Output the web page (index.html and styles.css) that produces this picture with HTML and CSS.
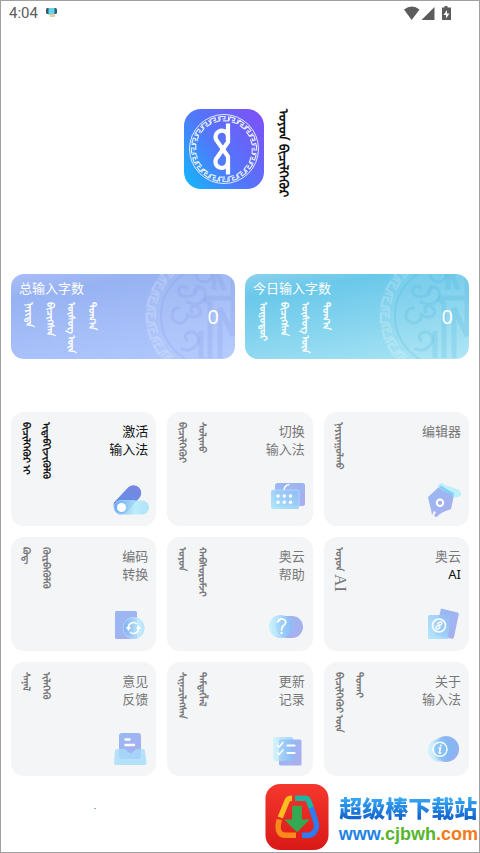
FILE: index.html
```html
<!DOCTYPE html>
<html lang="zh-CN">
<head>
<meta charset="utf-8">
<meta name="viewport" content="width=device-width, initial-scale=1">
<title>奥云输入法</title>
<link rel="stylesheet" href="styles.css">
</head>
<body>
<svg class="defs" aria-hidden="true">
  <defs>
    <linearGradient id="peri" x1="0" y1="0" x2="1" y2="1"><stop offset="0" stop-color="#98b9f3"/><stop offset="1" stop-color="#a9aeee"/></linearGradient>
    <linearGradient id="sky" x1="0" y1="1" x2="1" y2="0"><stop offset="0" stop-color="#a9e6fb"/><stop offset="1" stop-color="#8fbcf6"/></linearGradient>
    <linearGradient id="fade" x1="0" y1="0" x2="1" y2="0"><stop offset="0" stop-color="#c3f2fd"/><stop offset="1" stop-color="#7fbff8"/></linearGradient>
    <linearGradient id="deep" x1="0" y1="1" x2="1" y2="0"><stop offset="0" stop-color="#5b91e4"/><stop offset="1" stop-color="#7a86e3"/></linearGradient>
    <linearGradient id="ice" x1="0" y1="0" x2="1" y2="0"><stop offset="0" stop-color="#6fa9ee"/><stop offset=".6" stop-color="#b2ecfb"/><stop offset="1" stop-color="#a4dffb"/></linearGradient>
    <path id="fret" d="M193.500-14v-8h9v5h-4M206.500-22v8h-9" />
    <g id="frets"><use href="#fret"/><use href="#fret" transform="rotate(15 200 42)"/><use href="#fret" transform="rotate(30 200 42)"/><use href="#fret" transform="rotate(45 200 42)"/><use href="#fret" transform="rotate(60 200 42)"/><use href="#fret" transform="rotate(75 200 42)"/></g>
    <g id="ornament" fill="none" stroke="currentColor">
      <circle class="disc" cx="200" cy="42" r="66" stroke="none"/>
      <g class="ring" stroke-width="2">
        <use href="#frets" transform="rotate(270 200 42)"/><use href="#frets" transform="rotate(180 200 42)"/><use href="#frets"/>
      </g>
      <circle cx="200" cy="42" r="50" stroke-width="2"/>
      <g stroke-width="3" stroke-linecap="round">
        <path d="M176 14c-8-6-12 6-4 8 8 2 14-2 14-10M176 28c12 6 20-2 18-10-2-8-13-5-10 2M168 34c-7 0-10 10-3 14 7 3 12-2 11-8M176 40c6 6 18 2 12-6-4-5-11 0-7 4M176 66c-6-6 6-12 10-5 5 9-6 18-15 14M185 1c2 9 14 9 16 0"/>
      </g>
      <path stroke-width="5" d="M190 84V57M199 84V30l-6-6M196 24h24M209 84V34l13 28V2M203 16V0M213 16l-6-16"/>
    </g>
  </defs>
</svg>
<div class="screen">
  <header class="status">
    <time class="clock">4:04</time>
    <svg class="notice" viewBox="0 0 11 10" aria-hidden="true"><rect x="0" y="0" width="11" height="6" rx="1.500" fill="#355a70"/><rect x="2.500" y="0" width="6" height="7" fill="#67d3ec"/><path d="M4 6h5v3H4z" fill="#e6cf98"/></svg>
    <svg class="signals" viewBox="0 0 47 15" fill="#5c5c5c" aria-hidden="true">
      <path d="M0 3.500Q8 -2.500 15.500 3.500L7.700 14zM30.500 1v13H17.500z"/>
      <path fill-rule="evenodd" d="M40.500 0h3v1.500H47V14h-9V1.500h2.500zM43 4l-3.500 5h2.500v3.500L45.500 7.500H43z"/>
    </svg>
  </header>

  <main>
    <section class="brand">
      <svg class="logo" viewBox="0 0 80 80" role="img" aria-label="奥云">
        <defs>
          <linearGradient id="lg" x1="0" y1=".9" x2="1" y2=".2"><stop offset="0" stop-color="#16b5fb"/><stop offset=".42" stop-color="#4d7bfb"/><stop offset="1" stop-color="#7b53f8"/></linearGradient>
          <path id="key" d="M36 11.500V7.500h5v2.500h-2.500M44.500 7.500v4.300H39"/>
          <g id="keys"><use href="#key"/><use href="#key" transform="rotate(18 40 40)"/><use href="#key" transform="rotate(36 40 40)"/><use href="#key" transform="rotate(54 40 40)"/><use href="#key" transform="rotate(72 40 40)"/></g>
        </defs>
        <rect width="80" height="80" rx="17" fill="url(#lg)"/>
        <g fill="none" stroke="#e4ecff" stroke-width="1.200">
          <circle cx="40" cy="40" r="34.500" stroke-width="1"/>
          <use href="#keys"/><use href="#keys" transform="rotate(90 40 40)"/><use href="#keys" transform="rotate(180 40 40)"/><use href="#keys" transform="rotate(270 40 40)"/>
        </g>
        <g fill="none" stroke="#fff" stroke-width="4.200">
          <path d="M44 14.500V33L33.500 48a6.300 6.300 0 1 0 10.500 5.500"/>
          <path d="M44 31V26.500a6.300 6.300 0 1 0-10.500 6L44 47.500V65.500"/>
        </g>
      </svg>
      <h1 class="mn brand-name" lang="mn-Mong">ᠣᠶᠤᠨ ᠪᠢᠴᠢᠯᠭᠡᠭᠦᠷ</h1>
    </section>

    <section class="stats">
      <article class="stat total">
        <svg class="pattern" viewBox="0 0 224 85" preserveAspectRatio="xMaxYMid slice" aria-hidden="true"><use href="#ornament"/></svg>
        <div class="stat-text">
          <h2>总输入字数</h2>
          <p class="mn" lang="mn-Mong">ᠨᠡᠶᠢᠲᠡ<br>ᠪᠢᠴᠢᠭᠰᠡᠨ<br>ᠦᠰᠦᠭ&#x202f;ᠦᠨ<br>ᠲᠣᠭ᠎ᠠ</p>
        </div>
        <strong>0</strong>
      </article>
      <article class="stat today">
        <svg class="pattern" viewBox="0 0 224 85" preserveAspectRatio="xMaxYMid slice" aria-hidden="true"><use href="#ornament"/></svg>
        <div class="stat-text">
          <h2>今日输入字数</h2>
          <p class="mn" lang="mn-Mong">ᠥᠨᠥᠳᠦᠷ<br>ᠪᠢᠴᠢᠭᠰᠡᠨ<br>ᠦᠰᠦᠭ&#x202f;ᠦᠨ<br>ᠲᠣᠭ᠎ᠠ</p>
        </div>
        <strong>0</strong>
      </article>
    </section>

    <nav class="tiles">
      <button class="tile active" type="button">
        <span class="mn" lang="mn-Mong">ᠪᠢᠴᠢᠯᠭᠡᠭᠦᠷ&#x202f;ᠢ<br>ᠢᠳᠡᠪᠬᠢᠵᠢᠭᠦᠯᠬᠦ</span>
        <span class="side"><span class="label">激活<br>输入法</span>
        <svg class="icon" viewBox="0 0 40 40" aria-hidden="true"><path d="M6 22.500L20 7.500a7.500 7.500 0 0 1 11 11L18 32.500A8.500 8.500 0 0 1 6 22.500z" fill="url(#deep)"/><rect x="6" y="20.500" width="35" height="14" rx="7" fill="url(#ice)" opacity=".85"/><path d="M27 20.500H13a7 7 0 0 0 0 14" fill="none" stroke="#a9d3fa" stroke-width=".8"/><circle cx="13.500" cy="27.500" r="4.500" fill="#fff"/></svg></span>
      </button>
      <button class="tile" type="button">
        <span class="mn" lang="mn-Mong">ᠪᠢᠴᠢᠯᠭᠡᠭᠦᠷ<br>ᠰᠣᠯᠢᠬᠤ</span>
        <span class="side"><span class="label">切换<br>输入法</span>
        <svg class="icon" viewBox="0 0 40 40" aria-hidden="true"><rect x="10" y="3" width="30" height="23" rx="2.500" fill="url(#peri)"/><path d="M19 11c0-4 2-6 5.500-6.500" fill="none" stroke="#fff" stroke-width="1.500"/><rect x="6" y="10" width="28" height="19" rx="2" fill="url(#sky)" opacity=".92"/><path d="M8 10h24q2 0 2 2v15q0 2-2 2" fill="none" stroke="#b8dcfc" stroke-width=".8"/><g fill="#fff"><circle cx="13" cy="16" r="1.700"/><circle cx="19.300" cy="16" r="1.700"/><circle cx="25.500" cy="16" r="1.700"/><circle cx="13" cy="22.300" r="1.700"/><circle cx="19.300" cy="22.300" r="1.700"/><circle cx="25.500" cy="22.300" r="1.700"/></g></svg></span>
      </button>
      <button class="tile" type="button">
        <span class="mn" lang="mn-Mong">ᠨᠠᠶᠢᠷᠠᠭᠤᠯᠬᠤ</span>
        <span class="side"><span class="label">编辑器</span>
        <svg class="icon" viewBox="0 0 40 40" aria-hidden="true"><path d="M20 5L33 15l-3 14c-5 2-10 3-14 8l-3-1 2-4-2-1-2 4c-1-7-3-12-4-18z" fill="url(#peri)"/><path d="M17 6q2-5 7-1l14 5q4 4 1 6-2 2-6 1L19 9z" fill="#a8ecf9" opacity=".75"/><path d="M20 6l13 7-1 4-13-9z" fill="#75c2f2" opacity=".65"/><circle cx="19" cy="22.700" r="3.200" fill="none" stroke="#fff" stroke-width="2"/></svg></span>
      </button>
      <button class="tile" type="button">
        <span class="mn" lang="mn-Mong">ᠺᠣᠳ᠋<br>ᠬᠥᠷᠪᠡᠭᠦᠯᠬᠦ</span>
        <span class="side"><span class="label">编码<br>转换</span>
        <svg class="icon" viewBox="0 0 40 40" aria-hidden="true"><rect x="7" y="6" width="22" height="28" rx="1.500" fill="url(#peri)"/><circle cx="25.500" cy="23" r="11" fill="url(#ice)" opacity=".7"/><circle cx="25.500" cy="23" r="10.500" fill="none" stroke="#bddffc" stroke-width=".8"/><path d="M20.500 23a5 5 0 0 1 8.500-4M30.500 23a5 5 0 0 1-8.500 4" fill="none" stroke="#fff" stroke-width="1.600"/><path d="M18 22h5l-2.500 4zM28 24h5l-2.500-4z" fill="#fff"/></svg></span>
      </button>
      <button class="tile" type="button">
        <span class="mn" lang="mn-Mong">ᠣᠶᠤᠨ<br>ᠬᠠᠪᠰᠤᠷᠤᠮᠵᠢ</span>
        <span class="side"><span class="label">奥云<br>帮助</span>
        <svg class="icon" viewBox="0 0 40 40" aria-hidden="true"><rect x="11" y="11" width="27" height="22" rx="11" fill="url(#peri)"/><circle cx="15.500" cy="21.500" r="11.500" fill="url(#fade)" opacity=".82"/><path d="M13 17q1-4 5-3c5 2 2 6 0 7-1 1-1.500 2-1.500 4" fill="none" stroke="#fff" stroke-width="1.800" stroke-linecap="round"/><circle cx="16.500" cy="28" r="1.200" fill="#fff"/></svg></span>
      </button>
      <button class="tile ai" type="button">
        <span class="mn" lang="mn-Mong">ᠣᠶᠤᠨ <span class="latin">AI</span></span>
        <span class="side"><span class="label">奥云<br><b>AI</b></span>
        <svg class="icon" viewBox="0 0 40 40" aria-hidden="true"><path d="M20 3.500l16.500 4q1.500.5 1.200 2L33 32q-.5 2-2 1.700L14 30z" fill="url(#peri)"/><path d="M8.500 10H25q4 0 4 4L27 34H7V12q0-2 1.500-2z" fill="url(#sky)" opacity=".85"/><g fill="none" stroke="#fff"><circle cx="18" cy="20.500" r="6.500" stroke-width="1.600"/><path d="M17.500 21.500l3-2.200c1.500-1.500-.5-3.500-2-2l-2 2M18.500 19.500l-3 2.200c-1.500 1.500.5 3.500 2 2l2-2" stroke-width="1.300"/></g></svg></span>
      </button>
      <button class="tile" type="button">
        <span class="mn" lang="mn-Mong">ᠰᠠᠨᠠᠯ<br>ᠢᠯᠡᠭᠡᠬᠦ</span>
        <span class="side"><span class="label">意见<br>反馈</span>
        <svg class="icon" viewBox="0 0 40 40" aria-hidden="true"><rect x="11" y="3" width="22" height="26" rx="3" fill="url(#peri)"/><path d="M9 19h7q2 0 3 2 3.500 4 7 0 1-2 3-2h6q2 0 2 2l1.500 12q0 2-2 2H8q-2 0-2-2L7 21q0-2 2-2z" fill="#a6dcfa" opacity=".8"/><path d="M17.500 9.500h4M17.500 15h8.500" stroke="#fff" stroke-width="2.400" stroke-linecap="round"/></svg></span>
      </button>
      <button class="tile" type="button">
        <span class="mn" lang="mn-Mong">ᠰᠢᠨᠡᠴᠢᠯᠡᠭᠰᠡᠨ<br>ᠲᠡᠮᠳᠡᠭᠯᠡᠯ</span>
        <span class="side"><span class="label">更新<br>记录</span>
        <svg class="icon" viewBox="0 0 40 40" aria-hidden="true"><rect x="14" y="9.500" width="22.500" height="26" rx="1.500" fill="url(#peri)"/><rect x="8" y="7" width="20" height="24" rx="2" fill="url(#fade)" opacity=".65"/><g fill="none" stroke="#fff" stroke-width="1.600" stroke-linecap="round"><path d="M12.500 15.500l1.500 1.500 4-4.500M12.500 23l1.500 1.500 4-4.500"/><path d="M22.500 15.500h7M22.500 23h7" stroke-width="2.200"/></g></svg></span>
      </button>
      <button class="tile" type="button">
        <span class="mn" lang="mn-Mong">ᠪᠢᠴᠢᠯᠭᠡᠭᠦᠷ&#x202f;ᠦᠨ<br>ᠲᠤᠬᠠᠢ</span>
        <span class="side"><span class="label">关于<br>输入法</span>
        <svg class="icon" viewBox="0 0 40 40" aria-hidden="true"><circle cx="25" cy="19" r="13" fill="url(#peri)"/><circle cx="18.500" cy="20" r="11.500" fill="url(#fade)" opacity=".65"/><circle cx="26" cy="19" r="12" fill="#69b7f6" opacity=".4"/><circle cx="19" cy="19.300" r="7" fill="none" stroke="#fff" stroke-width="1.400"/><path d="M17.500 18h2l-1.200 5h2" fill="none" stroke="#fff" stroke-width="1.500"/><circle cx="19.800" cy="15.500" r="1.100" fill="#fff"/></svg></span>
      </button>
    </nav>
  </main>

  <footer class="credit">
    <span class="speck"></span>
    <svg class="credit-logo" viewBox="0 0 64 68" aria-hidden="true">
      <defs><linearGradient id="red" x1="0" y1="0" x2="0" y2="1"><stop offset="0" stop-color="#f5372d"/><stop offset="1" stop-color="#d91917"/></linearGradient></defs>
      <rect width="64" height="67" rx="15" fill="url(#red)"/>
      <g fill="none" stroke-width="5.500" stroke-linejoin="round">
        <path d="M15 34L22 17q1-2.500 5-2.500" stroke="#fdbd22"/>
        <path d="M30 14.500h10q3 0 4 3l3 8" stroke="#1cb5a4"/>
        <path d="M46.500 24L51 38q2 6-1 10-2 4-6 4h-7" stroke="#2d7cf0"/>
        <path d="M14 36l-1 5q-1 11 7 11h11" stroke="#fb8a1d"/>
      </g>
      <path d="M27 22h10v14h8L32 49 19 36h8z" fill="#35a852"/>
    </svg>
    <a class="credit-link" href="#"><span class="credit-name">超级棒下载站</span><span class="credit-url">www<span class="green">.cjbwh</span><span class="orange">.com</span></span></a>
  </footer>
</div>
</body>
</html>
```

FILE: styles.css
```css
* { box-sizing: border-box; }
body {
  margin: 0;
  background: #fff;
  color: #777;
  font-family: "Noto Sans", "Noto Sans CJK SC", "Noto Sans Mongolian", "Mongolian Baiti", sans-serif;
}
.defs { position: absolute; width: 0; height: 0; }
.screen {
  min-height: 100vh;
  border: 1px solid #a0a0a0;
  display: flex;
  flex-direction: column;
}
h1, h2, p { margin: 0; font-weight: 400; }
svg { display: block; flex: none; }

.status {
  display: flex;
  align-items: center;
  height: 24px;
  padding: 0 28px 0 8px;
}
.clock { font: 15px/24px Roboto, sans-serif; color: #5c5c5c; }
.notice { width: 11px; height: 10px; margin-left: 8px; }
.signals { width: 47px; height: 15px; margin-left: auto; }

main { padding: 0 10px; }
.mn { writing-mode: vertical-lr; text-align: left; white-space: nowrap; }

.brand {
  display: flex;
  justify-content: center;
  gap: 10px;
  height: 84px;
  margin: 84px 2px 81px 0;
}
.logo { width: 80px; height: 80px; }
.brand-name { font-size: 13px; font-weight: 700; line-height: 20px; color: #111; }

.stats { display: grid; grid-template-columns: 1fr 1fr; gap: 10px; }
.stat {
  position: relative;
  display: flex;
  align-items: center;
  justify-content: space-between;
  height: 85px;
  padding: 0 16px 0 8px;
  overflow: hidden;
  border-radius: 13px;
  color: #fff;
}
.total { background: linear-gradient(170deg, #a9bef8 0, #97b2f2 20%, #a6bff9 60%, #b2c9ff 100%); }
.today { background: linear-gradient(170deg, #8ad2ee 0, #6ac8ea 20%, #8ad6ef 60%, #abe6f6 100%); }
.pattern { position: absolute; inset: 0; width: 100%; height: 100%; }
.total .pattern { color: rgba(120, 151, 226, .2); }
.today .pattern { color: rgba(72, 177, 216, .2); }
.disc { fill: rgba(255, 255, 255, .06); }
.ring { stroke: rgba(255, 255, 255, .2); }
.stat-text { position: relative; height: 100%; padding-top: 5px; }
.stat h2 { font-size: 13px; line-height: 18px; }
.stat .mn { margin-top: 5px; font-size: 10px; font-weight: 700; line-height: 21px; }
.stat strong { position: relative; font-size: 20px; font-weight: 400; }

.tiles {
  display: grid;
  grid-template-columns: repeat(3, 1fr);
  gap: 11px;
  margin-top: 53px;
}
.tile {
  display: flex;
  justify-content: space-between;
  height: 114px;
  padding: 10px 8px 6px 6px;
  border: 0;
  border-radius: 13px;
  background: #f3f5f7;
  color: #777;
  font: inherit;
  font-size: 13px;
  line-height: 18px;
  text-align: right;
}
.tile .mn { font-size: 10px; font-weight: 700; line-height: 20px; }
.tile .latin { font-family: "Liberation Serif", serif; font-size: 17px; font-weight: 400; }
.side { display: flex; flex-direction: column; justify-content: space-between; align-items: flex-end; height: 100%; }
.active, .tile b { color: #111; font-weight: 400; }
.icon { width: 40px; height: 40px; overflow: visible; }

.credit {
  display: flex;
  justify-content: flex-end;
  gap: 10px;
  margin-top: 8px;
  padding-right: 1px;
}
.speck { width: 2px; height: 1px; margin: 24px auto 0 93px; background: #7fbf9c; }
.credit-logo { width: 64px; height: 67px; }
.credit-link {
  display: flex;
  flex-direction: column;
  align-items: center;
  padding-top: 8px;
  color: #1d83e2;
  text-decoration: none;
}
.credit-name {
  font: 900 23px/30px "Noto Sans CJK SC", sans-serif;
  background: linear-gradient(#37a8f5 20%, #1467cf 85%);
  background-clip: text;
  -webkit-background-clip: text;
  color: transparent;
}
.credit-url { font: 700 18px/24px "Liberation Sans", sans-serif; }
.green { color: #55b52c; }
.orange { color: #f47a16; }
```
